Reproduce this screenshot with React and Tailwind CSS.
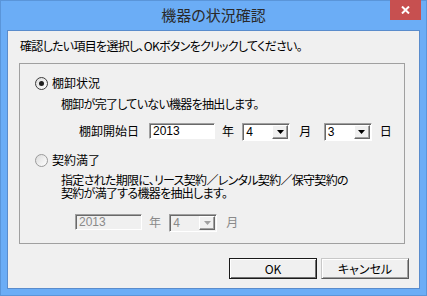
import React from 'react';

const jp = "font-['Noto_Sans_CJK_JP',sans-serif] [font-feature-settings:'palt']";

function Radio({ checked }) {
  return (
    <span
      className={`w-[13px] h-[13px] rounded-full border flex items-center justify-center bg-gradient-to-br from-[#dcdcdc] to-white ${
        checked ? 'border-[#3c3c3c]' : 'border-[#9a9a9a]'
      }`}
    >
      {checked && <span className="w-[5px] h-[5px] rounded-full bg-[#1e1e1e]" />}
    </span>
  );
}

function TextBox({ value, disabled, width }) {
  return (
    <div
      className={`h-[16px] border border-t-[#a0a0a0] border-l-[#a0a0a0] border-b-white border-r-white shadow-[inset_1px_1px_0_#696969] flex items-center pl-[3px] text-[12px] leading-none tracking-normal font-['Liberation_Sans',sans-serif] ${
        disabled ? 'bg-[#f0f0f0] text-[#8a8a8a]' : 'bg-white text-black'
      } ${width}`}
    >
      {value}
    </div>
  );
}

function Combo({ value, disabled }) {
  return (
    <div
      className={`w-[48px] h-[18px] border border-t-[#a0a0a0] border-l-[#a0a0a0] border-b-white border-r-white shadow-[inset_1px_1px_0_#696969] flex items-stretch pl-[3px] pt-px text-[12px] tracking-normal font-['Liberation_Sans',sans-serif] ${
        disabled ? 'bg-[#f0f0f0] text-[#8a8a8a]' : 'bg-white text-black'
      }`}
    >
      <span className="flex-1 leading-[15px]">{value}</span>
      <span className="w-[16px] mb-px mr-px bg-[#f0f0f0] border border-t-white border-l-white border-b-[#696969] border-r-[#696969] shadow-[inset_-1px_-1px_0_#a0a0a0] flex items-center justify-center">
        <svg width="7" height="4" viewBox="0 0 7 4">
          <path d="M0 0H7L3.5 4Z" fill={disabled ? '#a0a0a0' : '#000'} />
        </svg>
      </span>
    </div>
  );
}

export default function App() {
  return (
    <div className="w-[427px] h-[296px] border border-[#5a95d9] bg-[#6badf6] flex flex-col px-[6px] pb-[6px]">
      <div className="h-[29px] relative flex items-center justify-center">
        <span className={`text-[15px] text-[#2a2a2a] -mt-px ${jp}`}>機器の状況確認</span>
        <div className="absolute -top-px right-[-1px] w-[31px] h-[20px] bg-[#c75050] flex items-center justify-center">
          <svg width="9" height="8" viewBox="0 0 9 8">
            <path d="M1 0.5L8 7.5M8 0.5L1 7.5" stroke="#fff" strokeWidth="2" />
          </svg>
        </div>
      </div>

      <div className={`flex-1 border border-[#5a8ccc] bg-[#f0f0f0] flex flex-col text-[12px] text-black tracking-[-0.7px] ${jp}`}>
        <p className="pt-[8px] pl-[12px] h-[22px] leading-[14px]">
          確認したい項目を選択し、OKボタンをクリックしてください。
        </p>

        <div className="mt-[10px] ml-[11px] w-[386px] h-[181px] border border-[#a0a0a0] flex flex-col">
          <div className="mt-[12px] h-[14px] pl-[15px] flex items-center gap-[4px]">
            <Radio checked />
            <span className="leading-[14px] tracking-normal">棚卸状況</span>
          </div>
          <div className="mt-[7px] h-[14px] pl-[41px] leading-[14px]">
            棚卸が完了していない機器を抽出します。
          </div>
          <div className="mt-[12px] h-[18px] pl-[59px] flex items-start">
            <span className="w-[70px] leading-[16px] tracking-normal">棚卸開始日</span>
            <TextBox value="2013" width="w-[66px]" />
            <span className="ml-[7px] leading-[16px]">年</span>
            <span className="ml-[9px]"><Combo value="4" /></span>
            <span className="ml-[9px] leading-[16px]">月</span>
            <span className="ml-[13px]"><Combo value="3" /></span>
            <span className="ml-[8px] leading-[16px]">日</span>
          </div>
          <div className="mt-[12px] h-[14px] pl-[15px] flex items-center gap-[4px]">
            <Radio />
            <span className="leading-[14px] tracking-normal">契約満了</span>
          </div>
          <div className="mt-[6px] pl-[41px] leading-[13px]">
            <div>指定された期限に、リース契約／レンタル契約／保守契約の</div>
            <div>契約が満了する機器を抽出します。</div>
          </div>
          <div className="mt-[15px] h-[18px] pl-[55px] flex items-start text-[#8a8a8a]">
            <TextBox value="2013" width="w-[67px]" disabled />
            <span className="ml-[7px] leading-[16px]">年</span>
            <span className="ml-[9px]"><Combo value="4" disabled /></span>
            <span className="ml-[9px] leading-[16px]">月</span>
          </div>
        </div>

        <div className="mt-[14px] pr-[10px] flex justify-end gap-[4px] tracking-normal">
          <button className="w-[88px] h-[21px] border border-[#1a1a1a] bg-[#f0f0f0] shadow-[inset_1px_1px_0_#fff,inset_-1px_-1px_0_#707070] text-[12px] leading-none">
            OK
          </button>
          <button className="w-[88px] h-[21px] border border-t-[#c8c8c8] border-l-[#c8c8c8] border-b-[#5a5a5a] border-r-[#5a5a5a] bg-[#f0f0f0] shadow-[inset_1px_1px_0_#fff,inset_-1px_-1px_0_#a0a0a0] text-[12px] leading-none">
            キャンセル
          </button>
        </div>
      </div>
    </div>
  );
}
